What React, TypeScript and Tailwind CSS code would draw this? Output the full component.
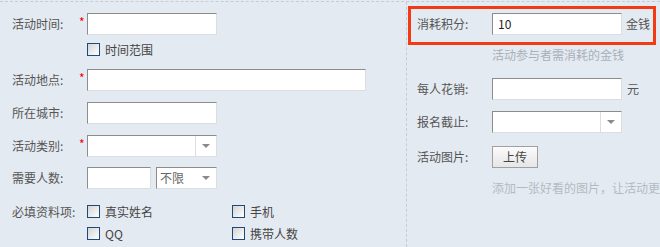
import React from "react";

const font = { fontFamily: '"Noto Sans CJK SC", "Noto Sans", sans-serif' };

function Input({ w, value }: { w: string; value?: string }) {
  return (
    <div
      className={`${w} h-[22px] bg-white border-t border-l border-t-[#8c8c8c] border-l-[#8c8c8c] border-b border-r border-b-[#dadde1] border-r-[#dadde1] flex items-center pl-[5px] text-[12px] text-[#222]`}
    >
      {value}
    </div>
  );
}

function Arrow() {
  return (
    <svg width="8" height="5" viewBox="0 0 8 5" className="block">
      <path d="M0 0 L8 0 L4 4 Z" fill="#8a8a8a" />
    </svg>
  );
}

function Select({ w, text, divider }: { w: string; text?: string; divider: boolean }) {
  return (
    <div
      className={`${w} h-[22px] bg-white border-t border-l border-t-[#8c8c8c] border-l-[#8c8c8c] border-b border-r border-b-[#dadde1] border-r-[#dadde1] flex items-center`}
    >
      <div className="flex-1 pl-[3px] text-[12px] text-[#666] leading-none">{text}</div>
      {divider ? (
        <div className="w-[21px] h-full border-l border-l-[#dadde1] flex items-center justify-center">
          <Arrow />
        </div>
      ) : (
        <div className="w-[21px] h-full flex items-center justify-center">
          <Arrow />
        </div>
      )}
    </div>
  );
}

function Check({ label }: { label: string }) {
  return (
    <div className="flex items-center gap-[5px]">
      <div className="w-[13px] h-[13px] border border-[#1d4a7a] bg-gradient-to-br from-[#d4d4d4] to-white" />
      <span className="text-[12px] text-[#444] leading-none">{label}</span>
    </div>
  );
}

function LRow({
  label,
  req,
  children,
  className,
}: {
  label: string;
  req?: boolean;
  children: React.ReactNode;
  className?: string;
}) {
  return (
    <div className={`flex items-center ${className ?? ""}`}>
      <div className="w-[79px] pl-[12px] text-[12px] text-[#555] whitespace-nowrap leading-none">{label}</div>
      <div className="w-[8px] self-start pt-[3px] text-[12px] text-[#e00] leading-none">{req ? "*" : ""}</div>
      {children}
    </div>
  );
}

function RRow({ label, children, className }: { label: string; children: React.ReactNode; className?: string }) {
  return (
    <div className={`flex items-center ${className ?? ""}`}>
      <div className="w-[75px] text-[12px] text-[#555] whitespace-nowrap leading-none">{label}</div>
      {children}
    </div>
  );
}

export default function App() {
  return (
    <div style={font} className="w-[660px] h-[247px] overflow-hidden bg-[#e4eaf1]">
      <div className="h-[1px]" />
      <div className="flex border-t border-dashed border-t-[#c6ccd3] h-[246px]">
        {/* left column */}
        <div className="w-[406px] shrink-0 flex flex-col pt-[11px]">
          <LRow label="活动时间:" req>
            <Input w="w-[130px]" />
          </LRow>
          <div className="pl-[87px] mt-[8px] h-[13px] flex items-center">
            <Check label="时间范围" />
          </div>
          <LRow label="活动地点:" req className="mt-[13px]">
            <Input w="w-[279px]" />
          </LRow>
          <LRow label="所在城市:" className="mt-[11px]">
            <Input w="w-[130px]" />
          </LRow>
          <LRow label="活动类别:" req className="mt-[11px]">
            <Select w="w-[130px]" divider />
          </LRow>
          <LRow label="需要人数:" className="mt-[10px]">
            <div className="flex gap-[5px]">
              <Input w="w-[64px]" />
              <Select w="w-[61px]" text="不限" divider={false} />
            </div>
          </LRow>
          <div className="flex mt-[16px]">
            <div className="w-[87px] pl-[12px] text-[12px] text-[#555] whitespace-nowrap leading-[13px]">必填资料项:</div>
            <div className="grid grid-cols-[145px_100px] gap-y-[9px]">
              <Check label="真实姓名" />
              <Check label="手机" />
              <Check label="QQ" />
              <Check label="携带人数" />
            </div>
          </div>
        </div>
        {/* right column */}
        <div className="flex-1 min-w-0 border-l border-dashed border-l-[#c6ccd3] flex flex-col">
          <div className="ml-[1px] mt-[4px] w-[248px] h-[39px] border-[3px] border-[#f23b12] pl-[6px] pt-[4px]">
            <div className="flex items-center">
              <div className="w-[75px] text-[12px] text-[#555] whitespace-nowrap leading-none">消耗积分:</div>
              <Input w="w-[130px]" value="10" />
              <span className="ml-[4px] text-[12px] text-[#555] leading-none">金钱</span>
            </div>
          </div>
          <div className="pl-[85px] mt-[2px] text-[12px] text-[#a9b0b8] leading-[16px] whitespace-nowrap">
            活动参与者需消耗的金钱
          </div>
          <div className="pl-[10px] flex flex-col">
            <RRow label="每人花销:" className="mt-[15px]">
              <Input w="w-[130px]" />
              <span className="ml-[5px] text-[12px] text-[#555] leading-none">元</span>
            </RRow>
            <RRow label="报名截止:" className="mt-[11px]">
              <Select w="w-[130px]" divider />
            </RRow>
            <RRow label="活动图片:" className="mt-[13px]">
              <button className="w-[46px] h-[22px] border border-[#a0a0a0] bg-gradient-to-b from-[#fbfbfb] to-[#e6e6e6] text-[12px] text-[#444] leading-none flex items-center justify-center">
                上传
              </button>
            </RRow>
            <div className="pl-[75px] mt-[12px] text-[12px] text-[#b4bac2] leading-[16px] whitespace-nowrap overflow-hidden">
              添加一张好看的图片，让活动更
            </div>
          </div>
        </div>
      </div>
    </div>
  );
}
